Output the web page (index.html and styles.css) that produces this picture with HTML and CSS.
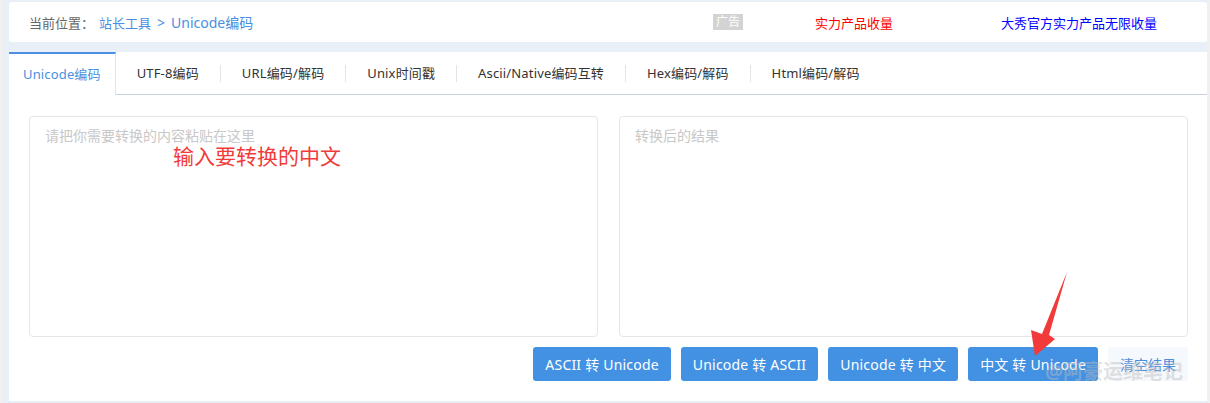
FILE: index.html
```html
<!DOCTYPE html>
<html lang="zh-CN">
<head>
    <meta charset="UTF-8">
    <meta name="viewport" content="width=device-width, initial-scale=1.0">
    <title>Unicode编码</title>
    <link rel="stylesheet" href="styles.css">
</head>
<body>
<div class="frame">
    <div class="crumb-bar">
        <span class="crumb-label">当前位置：</span>
        <a class="crumb-link" href="#">站长工具</a>
        <span class="crumb-arrow">&gt;</span>
        <a class="crumb-link current" href="#">Unicode编码</a>

        <div class="ads">
            <span class="ad-tag">广告</span>
            <a class="ad-red" href="#">实力产品收量</a>
            <a class="ad-blue" href="#">大秀官方实力产品无限收量</a>
        </div>
    </div>

    <div class="panel">
        <ul class="tabs">
            <li class="tab active">Unicode编码</li>
            <li class="tab">UTF-8编码</li>
            <li class="tab-sep"></li>
            <li class="tab">URL编码/解码</li>
            <li class="tab-sep"></li>
            <li class="tab">Unix时间戳</li>
            <li class="tab-sep"></li>
            <li class="tab">Ascii/Native编码互转</li>
            <li class="tab-sep"></li>
            <li class="tab">Hex编码/解码</li>
            <li class="tab-sep"></li>
            <li class="tab">Html编码/解码</li>
        </ul>

        <div class="tool-body">
            <div class="boxes">
                <textarea class="code-box" placeholder="请把你需要转换的内容粘贴在这里"></textarea>
                <textarea class="code-box" placeholder="转换后的结果"></textarea>
            </div>
            <div class="actions">
                <button class="btn">ASCII 转 Unicode</button>
                <button class="btn">Unicode 转 ASCII</button>
                <button class="btn">Unicode 转 中文</button>
                <button class="btn">中文 转 Unicode</button>
                <button class="btn btn-light">清空结果</button>
            </div>
        </div>
    </div>

    <!-- annotations drawn over the screenshot -->
    <div class="note">输入要转换的中文</div>
    <svg class="arrow" width="1210" height="403" viewBox="0 0 1210 403">
        <polygon points="1067,272 1049,335 1055,339 1035,356 1031,330 1042,334" fill="#f23a3a"/>
    </svg>
    <div class="watermark">@阿豪运维笔记</div>
</div>
</body>
</html>
```

FILE: styles.css
```css
html, body {
    margin: 0;
    padding: 0;
}

body {
    font-family: "Noto Sans", "Noto Sans CJK SC", sans-serif;
    background-color: #f0f0f0;
    color: #333;
}

.frame {
    position: relative;
    height: 403px;
    margin: 0 3px;
    padding: 2px 0 0 6px;
    background-color: #e9eff7; /* light blue page */
    box-sizing: border-box;
}

/* breadcrumb bar */
.crumb-bar {
    display: flex;
    align-items: center;
    height: 40px;
    padding-left: 20px;
    background-color: #fff;
    border-radius: 3px;
    font-size: 13px;
}

.crumb-label {
    color: #666;
    margin-right: 5px;
}

.crumb-link {
    color: #4a8fe0;
    text-decoration: none;
}

.crumb-link.current {
    font-size: 14px;
}

.crumb-arrow {
    color: #4a8fe0;
    font-size: 14px;
    margin: 0 6px;
}

.ads {
    display: flex;
    align-items: center;
    margin-left: auto;
    margin-right: 50px;
}

.ad-tag {
    background-color: #d3d3d3;
    color: #fff;
    font-size: 12px;
    line-height: 16px;
    padding: 0 3px;
}

.ad-red {
    color: #f00;
    text-decoration: none;
    margin-left: 72px;
}

.ad-blue {
    color: #00f;
    text-decoration: none;
    margin-left: 108px;
}

/* main panel */
.panel {
    margin-top: 10px;
    background-color: #fff;
    height: 349px;
}

.tabs {
    list-style-type: none;
    margin: 0;
    padding: 0;
    display: flex;
    align-items: center;
    height: 42px;
    border-bottom: 1px solid #c8d1df;
    font-size: 13px;
    letter-spacing: 0.15px;
}

.tab {
    padding: 0 21px;
    line-height: 42px;
    color: #333;
}

.tab.active {
    padding: 0 14px;
    line-height: 41px;
    height: 41px;
    align-self: flex-start;
    color: #4a8fe0;
    border-top: 2px solid #4a8fe0;
    border-right: 1px solid #dfe4ea;
    margin-bottom: -1px;
    background-color: #fff;
}

.tab-sep {
    width: 1px;
    height: 17px;
    background-color: #e4e4e4;
}

.tool-body {
    padding: 21px 19px 0 20px;
}

.boxes {
    display: flex;
    gap: 21px;
}

.code-box {
    flex: 1;
    height: 221px;
    box-sizing: border-box;
    margin: 0;
    padding: 8px 15px;
    border: 1px solid #e6e6e6;
    border-radius: 4px;
    resize: none;
    font-family: inherit;
    font-size: 14px;
    outline: none;
}

.code-box::placeholder {
    color: #c8c8c8;
}

.actions {
    display: flex;
    justify-content: flex-end;
    gap: 10px;
    margin-top: 10px;
}

.btn {
    height: 34px;
    padding: 0 12px;
    border: none;
    border-radius: 3px;
    background-color: #4391e3;
    color: #fff;
    font-family: inherit;
    font-size: 14px;
    letter-spacing: 0.2px;
    cursor: pointer;
}

.btn-light {
    background-color: #f5f8fc;
    color: #4a8fe0;
    letter-spacing: 0;
}

/* overlays */
.note {
    position: absolute;
    left: 170px;
    top: 142px;
    color: #f23a3a;
    font-size: 21px;
    line-height: 28px;
}

.arrow {
    position: absolute;
    left: -3px;
    top: 0;
    pointer-events: none;
}

.watermark {
    position: absolute;
    left: 1042px;
    top: 358px;
    font-size: 20px;
    font-weight: bold;
    line-height: 28px;
    color: rgba(190, 190, 190, 0.45);
    pointer-events: none;
}
```
